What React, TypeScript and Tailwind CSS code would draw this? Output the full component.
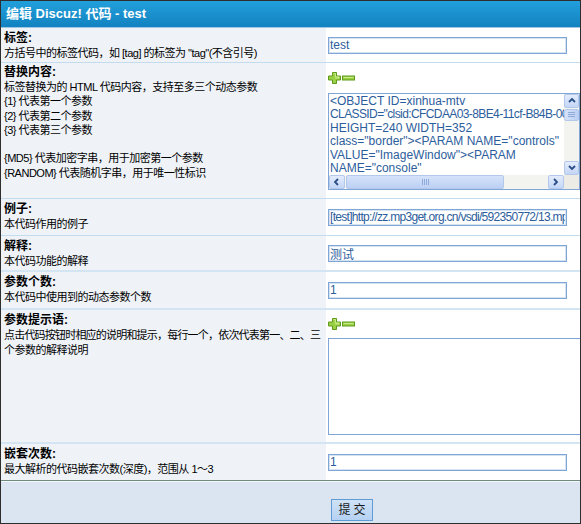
import React from "react";

const FONT = { fontFamily: '"Liberation Sans", Tahoma, "Noto Sans CJK SC", sans-serif' };

function PlusMinus() {
  return (
    <div className="flex items-center h-[12px] gap-[1px] self-start">
      <svg width="13" height="12" viewBox="0 0 13 12">
        <path d="M4.5 0.5h4v3.5h4v4h-4v3.5h-4v-3.5h-4v-4h4z" fill="#9ad043" stroke="#5f9a1c" strokeWidth="1" />
        <path d="M5.5 1.5h2v3.5h3.5v1h-3.5" fill="none" stroke="#c9ec8a" strokeWidth="1" />
      </svg>
      <svg width="13" height="12" viewBox="0 0 13 12">
        <rect x="0.5" y="4" width="12" height="4" fill="#9ad043" stroke="#5f9a1c" strokeWidth="1" />
        <line x1="1.5" y1="5.5" x2="11.5" y2="5.5" stroke="#c9ec8a" strokeWidth="1" />
      </svg>
    </div>
  );
}

function TextInput({ value, tight }: { value: string; tight?: boolean }) {
  return (
    <input
      readOnly
      value={value}
      className={`w-[239px] h-[17px] border border-[#7fa6d6] bg-white px-[1px] text-[12px] leading-[15px] text-[#2c5d9c] outline-none shadow-[inset_0_0_0_1px_#d4e3f4] overflow-hidden ${tight ? "tracking-[-0.7px]" : ""}`}
      style={FONT}
    />
  );
}

function Arrow({ dir }: { dir: "up" | "down" | "left" | "right" }) {
  const paths: Record<string, string> = {
    up: "M2 6 L5 3 L8 6",
    down: "M2 3 L5 6 L8 3",
    left: "M6 2 L3 5 L6 8",
    right: "M3 2 L6 5 L3 8",
  };
  return (
    <svg width="10" height="10" viewBox="0 0 10 10">
      <path d={paths[dir]} fill="none" stroke="#2b4d86" strokeWidth="1.8" />
    </svg>
  );
}

function SbBtn({ dir, cls }: { dir: "up" | "down" | "left" | "right"; cls: string }) {
  return (
    <div className={`${cls} flex items-center justify-center rounded-[2px] border border-[#b4c8ec] bg-gradient-to-b from-[#e3ecfc] to-[#c4d6f6]`}>
      <Arrow dir={dir} />
    </div>
  );
}

function CodeArea() {
  const lines = [
    "<OBJECT ID=xinhua-mtv",
    'CLASSID="clsid:CFCDAA03-8BE4-11cf-B84B-0020AFBBCCFA"',
    "HEIGHT=240 WIDTH=352",
    'class="border"><PARAM NAME="controls"',
    'VALUE="ImageWindow"><PARAM',
    'NAME="console"',
  ];
  return (
    <div className="w-[252px] h-[97px] shrink-0 self-start border border-[#7fa6d6] bg-white flex flex-col">
      <div className="flex flex-1 min-h-0">
        <div className="flex-1 overflow-hidden pl-[1px] pt-[1px] text-[12px] leading-[13.6px] text-[#2c5d9c] whitespace-pre" style={FONT}>
          {lines.map((l, i) => (
            <div key={l} className={i === 1 ? "tracking-[-0.6px]" : ""}>{l}</div>
          ))}
        </div>
        <div className="w-[15px] shrink-0 flex flex-col bg-[#f3f3ef]">
          <SbBtn dir="up" cls="h-[14px] w-[15px]" />
          <div className="h-[12px] w-[15px] mt-[1px] flex flex-col items-center justify-center gap-[1px] rounded-[2px] border border-[#b4c8ec] bg-gradient-to-r from-[#d5e2fa] to-[#bcd0f4]">
            <div className="w-[7px] h-[1px] bg-[#8fa9d8]" />
            <div className="w-[7px] h-[1px] bg-[#8fa9d8]" />
            <div className="w-[7px] h-[1px] bg-[#8fa9d8]" />
          </div>
          <div className="flex-1" />
          <SbBtn dir="down" cls="h-[14px] w-[15px]" />
        </div>
      </div>
      <div className="h-[14px] shrink-0 flex bg-[#f3f3ef]">
        <SbBtn dir="left" cls="w-[16px] h-[14px]" />
        <div className="w-[158px] h-[14px] ml-[1px] flex items-center justify-center gap-[1px] rounded-[2px] border border-[#b4c8ec] bg-gradient-to-b from-[#d5e2fa] to-[#bcd0f4]">
          <div className="w-[1px] h-[6px] bg-[#8fa9d8]" />
          <div className="w-[1px] h-[6px] bg-[#8fa9d8]" />
          <div className="w-[1px] h-[6px] bg-[#8fa9d8]" />
          <div className="w-[1px] h-[6px] bg-[#8fa9d8]" />
        </div>
        <div className="flex-1" />
        <SbBtn dir="right" cls="w-[16px] h-[14px]" />
        <div className="w-[15px] h-[14px] bg-[#ecebe5]" />
      </div>
    </div>
  );
}

function Row({
  h,
  label,
  desc,
  children,
  sep,
  pt = "pt-[3px]",
}: {
  h: string;
  label: string;
  desc: React.ReactNode;
  children: React.ReactNode;
  sep: string;
  pt?: string;
}) {
  return (
    <div className={`flex ${h} ${sep}`}>
      <div className={`w-[325px] shrink-0 bg-[#eff3f8] pl-[3px] ${pt} leading-[15px] text-black`} style={FONT}>
        <div className="font-bold text-[12px]">{label}</div>
        <div className="text-[11px] tracking-[-0.5px]">{desc}</div>
      </div>
      <div className="flex-1 min-w-0 bg-white pl-[2px] flex flex-col justify-center overflow-hidden">
        {children}
      </div>
    </div>
  );
}

export default function App() {
  return (
    <div className="w-[581px] h-[524px] border border-[#2e2e2e] bg-white flex flex-col overflow-hidden" style={FONT}>
      <div className="h-[26px] shrink-0 bg-gradient-to-b from-[#22a0dc] to-[#1282c0] flex items-center pl-[5px] text-white font-bold text-[13px]">
        编辑 Discuz! 代码 - test
      </div>
      <div className="h-[1px] bg-[#9fc6e4]" />
      <Row h="h-[35px]" label="标签:" desc={'方括号中的标签代码，如 [tag] 的标签为 "tag"(不含引号)'} sep="border-b border-[#c3dbef]">
        <TextInput value="test" />
      </Row>
      <Row
        h="h-[136px]"
        pt="pt-[2px]"
        label="替换内容:"
        desc={
          <div className="leading-[14.3px]">
            <div>标签替换为的 HTML 代码内容，支持至多三个动态参数</div>
            <div>{"{1}"} 代表第一个参数</div>
            <div>{"{2}"} 代表第二个参数</div>
            <div>{"{3}"} 代表第三个参数</div>
            <div className="h-[14.3px]" />
            <div>{"{MD5}"} 代表加密字串，用于加密第一个参数</div>
            <div>{"{RANDOM}"} 代表随机字串，用于唯一性标识</div>
          </div>
        }
        sep="border-b border-[#c3dbef]"
      >
        <PlusMinus />
        <div className="h-[9px]" />
        <CodeArea />
      </Row>
      <Row h="h-[37px]" label="例子:" desc="本代码作用的例子" sep="border-b border-[#c3dbef]">
        <TextInput value="[test]http://zz.mp3get.org.cn/vsdi/592350772/13.mp3[/test]" tight />
      </Row>
      <Row h="h-[36px]" label="解释:" desc="本代码功能的解释" sep="border-b-2 border-[#d3e4f3]">
        <TextInput value="测试" />
      </Row>
      <Row h="h-[38px]" label="参数个数:" desc="本代码中使用到的动态参数个数" sep="border-b-2 border-[#d3e4f3]">
        <TextInput value="1" />
      </Row>
      <Row
        h="h-[134px]"
        label="参数提示语:"
        desc={
          <>
            <div className="whitespace-nowrap tracking-[-0.8px]">点击代码按钮时相应的说明和提示，每行一个，依次代表第一、二、三</div>
            <div>个参数的解释说明</div>
          </>
        }
        sep="border-b-2 border-[#d3e4f3]"
      >
        <PlusMinus />
        <div className="h-[8px]" />
        <div className="w-[280px] h-[97px] shrink-0 self-start border border-[#7fa6d6] bg-white" />
      </Row>
      <Row h="h-[37px]" label="嵌套次数:" desc="最大解析的代码嵌套次数(深度)，范围从 1～3" sep="border-b border-[#6f8a7e]">
        <TextInput value="1" />
      </Row>
      <div className="flex-1 bg-[#dbe5f1] border-t border-[#f4f7fb] flex items-end pb-[2px] pl-[330px]">
        <button
          className="w-[42px] h-[22px] border border-[#5f9cd4] bg-gradient-to-b from-[#cfe2f8] to-[#b5d1f2] text-[12px] text-[#1a1a1a] tracking-[3px] pl-[3px]"
          style={FONT}
        >
          提交
        </button>
      </div>
    </div>
  );
}
